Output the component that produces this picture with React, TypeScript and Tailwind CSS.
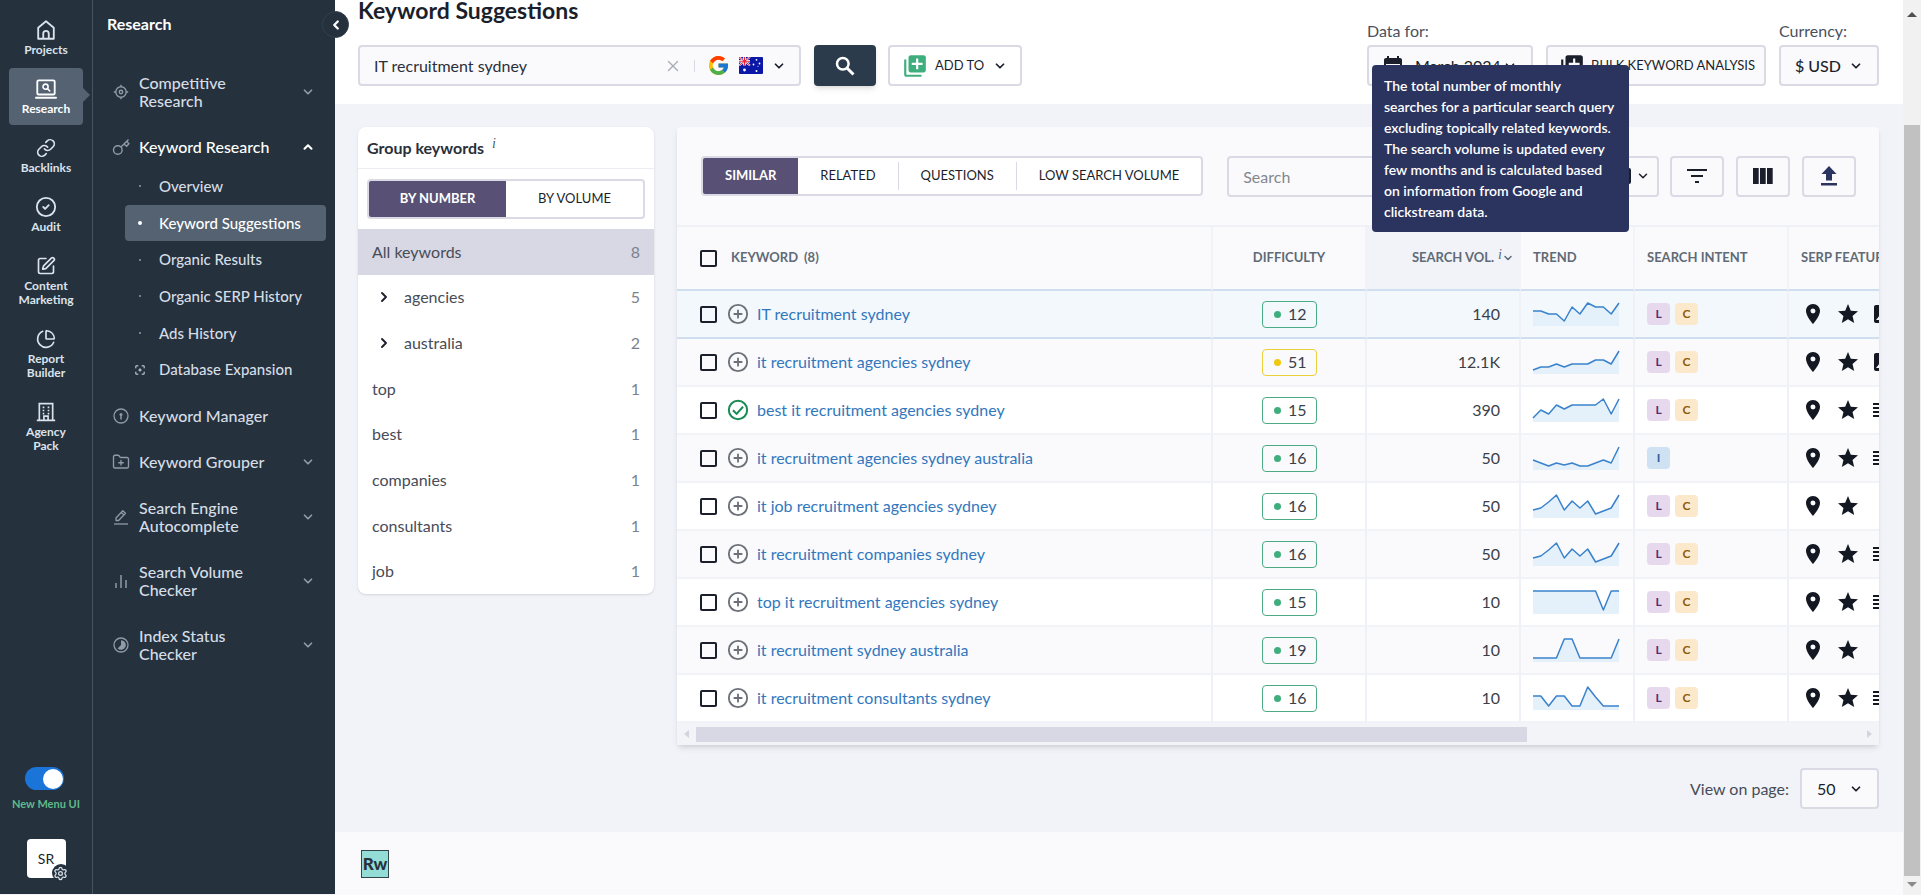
import { useState, type ReactNode } from 'react';
import {
  Link,
  CircleCheck,
  SquarePen,
  ChartPie,
  ChevronDown,
  ChevronUp,
  ChevronLeft,
  ChevronRight,
  FolderPlus,
  Settings,
  X,
  CirclePlus,
} from 'lucide-react';
import {
  MdLocationOn,
  MdStar,
  MdImage,
  MdLibraryAdd,
  MdCalendarMonth,
  MdFilterList,
} from 'react-icons/md';
import { FcGoogle } from 'react-icons/fc';

interface Keyword {
  text: string;
  added?: boolean;
  difficulty: number;
  volume: string;
  trend: number[];
  intents: string[];
  extra?: 'image' | 'list';
}

const KEYWORDS: Keyword[] = [
  { text: 'IT recruitment sydney', difficulty: 12, volume: '140', trend: [9, 9, 12, 12, 19, 5, 12, 1, 5, 5, 12, 1], intents: ['L', 'C'], extra: 'image' },
  { text: 'it recruitment agencies sydney', difficulty: 51, volume: '12.1K', trend: [20, 17, 17, 14, 17, 14, 14, 14, 10, 10, 14, 1], intents: ['L', 'C'], extra: 'image' },
  { text: 'best it recruitment agencies sydney', added: true, difficulty: 15, volume: '390', trend: [20, 12, 16, 7, 11, 7, 7, 7, 7, 1, 16, 1], intents: ['L', 'C'], extra: 'list' },
  { text: 'it recruitment agencies sydney australia', difficulty: 16, volume: '50', trend: [14, 17, 20, 17, 19, 17, 20, 20, 17, 14, 17, 1], intents: ['I'], extra: 'list' },
  { text: 'it job recruitment agencies sydney', difficulty: 16, volume: '50', trend: [16, 14, 8, 1, 16, 7, 14, 7, 20, 17, 14, 1], intents: ['L', 'C'] },
  { text: 'it recruitment companies sydney', difficulty: 16, volume: '50', trend: [16, 14, 8, 1, 16, 7, 14, 7, 20, 17, 14, 1], intents: ['L', 'C'], extra: 'list' },
  { text: 'top it recruitment agencies sydney', difficulty: 15, volume: '10', trend: [1, 1, 1, 1, 1, 1, 1, 1, 1, 20, 1, 1], intents: ['L', 'C'], extra: 'list' },
  { text: 'it recruitment sydney australia', difficulty: 19, volume: '10', trend: [20, 20, 20, 20, 1, 1, 20, 20, 20, 20, 20, 1], intents: ['L', 'C'] },
  { text: 'it recruitment consultants sydney', difficulty: 16, volume: '10', trend: [10, 10, 20, 10, 10, 20, 20, 1, 11, 20, 20, 20], intents: ['L', 'C'], extra: 'list' },
];

const GROUPS = [
  { name: 'agencies', count: 5, nested: true },
  { name: 'australia', count: 2, nested: true },
  { name: 'top', count: 1 },
  { name: 'best', count: 1 },
  { name: 'companies', count: 1 },
  { name: 'consultants', count: 1 },
  { name: 'job', count: 1 },
];

const INTENT_STYLES: Record<string, string> = {
  L: 'bg-[#e6d9ee] text-[#5a2d73]',
  C: 'bg-[#fce9cb] text-[#8a5a10]',
  I: 'bg-[#cfe2f4] text-[#2c5f96]',
};

const Home = () => (
  <svg viewBox="0 0 24 24" className="h-[22px] w-[22px]" fill="none" stroke="currentColor" strokeWidth="2" strokeLinejoin="round">
    <path d="M3.500 21.500V9.500L12 2.500l8.500 7v12z" />
    <path d="M9 21.500V16a3 3 0 0 1 6 0v5.500" />
  </svg>
);

const LaptopSearch = () => (
  <svg viewBox="0 0 24 24" className="h-[22px] w-6" fill="none" stroke="currentColor" strokeWidth="2" strokeLinecap="round">
    <rect x="2.500" y="2.500" width="19" height="15.500" rx="1.500" />
    <path d="M1 21.500h22" />
    <circle cx="11.500" cy="9.500" r="2.800" strokeWidth="1.700" />
    <path d="M13.700 11.700l2.300 2.300" strokeWidth="1.700" />
  </svg>
);

const Building = () => (
  <svg viewBox="0 0 24 24" className="h-5 w-5" fill="none" stroke="currentColor" strokeWidth="2">
    <path d="M4 22V2h16v20M1 22h22M9.500 22v-5h5v5" />
    <path d="M8 6.500h2M14 6.500h2M8 10.200h2M14 10.200h2M8 14h2M14 14h2" />
  </svg>
);

const Target = () => (
  <svg viewBox="0 0 16 16" className="h-4 w-4" fill="none" stroke="currentColor" strokeWidth="1.400">
    <circle cx="8" cy="8" r="5.200" />
    <circle cx="8" cy="8" r="1.700" />
    <path d="M8 .800v2M8 13.200v2M.800 8h2M13.200 8h2" />
  </svg>
);

const KeyIcon = () => (
  <svg viewBox="0 0 18 18" className="h-[18px] w-[18px]" fill="none" stroke="currentColor" strokeWidth="1.400">
    <circle cx="5.800" cy="12" r="4.300" />
    <path d="M9 9l7.500-7.500M12 6l2.600 2.300 2.300-2.600-2.300-2.400" />
  </svg>
);

const CircleKey = () => (
  <svg viewBox="0 0 16 16" className="h-4 w-4" fill="none" stroke="currentColor" strokeWidth="1.300">
    <circle cx="8" cy="8" r="7" />
    <circle cx="8" cy="6.500" r="1.500" fill="currentColor" stroke="none" />
    <path d="M8 6.500v5" strokeWidth="1.500" />
  </svg>
);

const PenUnderline = () => (
  <svg viewBox="0 0 16 16" className="h-4 w-4" fill="none" stroke="currentColor" strokeWidth="1.300" strokeLinejoin="round">
    <path d="M3 11.500V9l6.800-7.300 2.700 2.600L5.600 11.500zM8.300 3.400l2.600 2.500" />
    <path d="M1 15h14" />
  </svg>
);

const Bars = () => (
  <svg viewBox="0 0 16 16" className="h-4 w-4" fill="none" stroke="currentColor" strokeWidth="1.500">
    <path d="M3 15v-5M8 15V2M13 15V7" />
  </svg>
);

const StatusCircle = () => (
  <svg viewBox="0 0 16 16" className="h-4 w-4">
    <circle cx="8" cy="8" r="7" fill="none" stroke="currentColor" strokeWidth="1.300" />
    <path d="M8 3.200A4.800 4.800 0 1 1 4.600 11.400L8 8z" fill="currentColor" />
  </svg>
);

const Expansion = () => (
  <svg viewBox="0 0 12 12" className="h-[10px] w-[10px]" fill="none" stroke="currentColor" strokeWidth="1.200">
    <path d="M1 4V1h3M8 1h3v3M11 8v3H8M4 11H1V8M6 4v4M4 6h4" />
  </svg>
);

const AddedCheck = () => (
  <svg viewBox="0 0 24 24" className="h-[22px] w-[22px] text-[#1a8a54]" fill="none" stroke="currentColor" strokeWidth="2.200">
    <circle cx="12" cy="12" r="10" />
    <path d="M6.500 12.200l4 4 7-7.700" />
  </svg>
);

const TextLines = () => (
  <svg viewBox="0 0 20 16" className="h-4 w-5 shrink-0" fill="none" stroke="currentColor" strokeWidth="2">
    <path d="M0 2h20M0 6h20M0 10h20M0 14h20" />
  </svg>
);

const AustraliaFlag = () => (
  <svg viewBox="0 0 24 17" className="h-[17px] w-6">
    <rect width="24" height="17" rx="1" fill="#0a17a7" />
    <path d="M0 0l11 8.500M11 0L0 8.500" stroke="#fff" strokeWidth="1.800" />
    <path d="M5.500 0v8.500M0 4.250h11" stroke="#fff" strokeWidth="2.600" />
    <path d="M5.500 0v8.500M0 4.250h11M0 0l11 8.500M11 0L0 8.500" stroke="#e6273e" strokeWidth="1" />
    <g fill="#fff">
      <circle cx="5.500" cy="13" r="1.400" />
      <circle cx="17.500" cy="2.800" r=".900" />
      <circle cx="14.500" cy="7.500" r=".900" />
      <circle cx="20.500" cy="6.500" r=".900" />
      <circle cx="17.500" cy="14" r="1" />
      <circle cx="19" cy="9.300" r=".500" />
    </g>
  </svg>
);

const Sparkline = ({ values }: { values: number[] }) => {
  const points = values.map((v, i) => `${(i * 86) / 11},${v}`).join(' ');
  return (
    <svg viewBox="0 0 86 24" className="h-6 w-[86px] overflow-visible">
      <polygon points={`0,24 ${points} 86,24`} fill="#e4f0fa" />
      <polyline points={points} fill="none" stroke="#3a82cc" strokeWidth="1.500" strokeLinejoin="round" />
    </svg>
  );
};

const Checkbox = ({ label }: { label: string }) => (
  <input
    type="checkbox"
    aria-label={label}
    className="h-[17px] w-[17px] shrink-0 appearance-none rounded-xs border-2 border-[#1b1f2b] checked:bg-[#1b1f2b]"
  />
);

const RAIL: { label: string; icon: ReactNode; active?: boolean }[] = [
  { label: 'Projects', icon: <Home /> },
  { label: 'Research', icon: <LaptopSearch />, active: true },
  { label: 'Backlinks', icon: <Link className="h-5 w-5" /> },
  { label: 'Audit', icon: <CircleCheck className="h-[22px] w-[22px]" /> },
  { label: 'Content Marketing', icon: <SquarePen className="h-5 w-5" /> },
  { label: 'Report Builder', icon: <ChartPie className="h-5 w-5" /> },
  { label: 'Agency Pack', icon: <Building /> },
];

const SUB_ITEMS = ['Overview', 'Keyword Suggestions', 'Organic Results', 'Organic SERP History', 'Ads History', 'Database Expansion'];

const IconRail = () => {
  const [newMenu, setNewMenu] = useState(true);
  return (
    <nav className="flex w-[93px] shrink-0 flex-col items-center border-r border-[#475462] pt-[9px] pb-4">
      <ul className="flex w-full flex-col gap-0.5 px-[9px]">
        {RAIL.map((item) => (
          <li key={item.label} className="relative">
            <a
              href="#"
              className={`flex flex-col items-center gap-[3px] rounded px-1 pt-[11px] pb-[9px] text-center text-xs leading-[14px] font-bold ${item.active ? 'bg-[#546272] text-white' : 'text-[#dbe3ec]'}`}
            >
              <span className="flex h-5 items-center">{item.icon}</span>
              <span>{item.label}</span>
            </a>
            {item.active && (
              <span className="absolute top-5 left-full border-y-7 border-l-7 border-y-transparent border-l-[#546272]" />
            )}
          </li>
        ))}
      </ul>
      <label className="mt-auto flex flex-col items-center gap-[6px] text-[11px] leading-4 font-bold text-[#5fb98a]">
        <input type="checkbox" className="peer sr-only" checked={newMenu} onChange={() => setNewMenu(!newMenu)} />
        <span className={`mr-1 flex h-[23px] w-[39px] items-center rounded-full p-px ${newMenu ? 'justify-end bg-[#1b75d8]' : 'bg-gray-500'}`}>
          <span className="h-5 w-5 rounded-full bg-white" />
        </span>
        New Menu UI
      </label>
      <button className="relative mt-[27px] h-[39px] w-[39px] rounded bg-white text-sm text-[#1b1f2b]">
        SR
        <span className="absolute -right-[4px] -bottom-[4px] flex h-[18px] w-[18px] items-center justify-center rounded-full bg-[#25313d] text-[#dbe3ec]">
          <Settings className="h-[15px] w-[15px]" />
        </span>
      </button>
    </nav>
  );
};

const MenuItem = ({ icon, label, open, plain }: { icon: ReactNode; label: string; open?: boolean; plain?: boolean }) => (
  <button className={`flex w-full items-center py-[14px] pr-5 pl-[19px] text-left leading-[18px] font-medium ${open ? 'text-white' : 'text-[#d5dde6]'}`}>
    <span className="flex w-[18px] shrink-0 justify-center text-[#8f9ba7]">{icon}</span>
    <span className="ml-[9px] w-[140px]">{label}</span>
    {!plain &&
      (open ? <ChevronUp className="ml-auto h-[14px] w-[14px]" strokeWidth={3.5} /> : <ChevronDown className="ml-auto h-[14px] w-[14px] text-[#8f9ba7]" strokeWidth={3} />)}
  </button>
);

const ResearchMenu = () => (
  <nav className="relative w-[242px] shrink-0 text-base">
    <h2 className="px-[14px] pt-[14px] pb-[26px] leading-5 font-bold text-white">Research</h2>
    <MenuItem icon={<Target />} label="Competitive Research" />
    <MenuItem icon={<KeyIcon />} label="Keyword Research" open />
    <ul className="-mt-0.5 mb-[5px] grid min-h-[220px] auto-rows-fr pr-[9px] pl-8">
      {SUB_ITEMS.map((item) => {
        const active = item === 'Keyword Suggestions';
        return (
          <li key={item}>
            <a href="#" className={`flex h-full items-center rounded text-[15px] font-medium ${active ? 'bg-[#546272] text-white' : 'text-[#d5dde6]'}`}>
              <span className="ml-[9px] flex w-3 justify-center">
                {item === 'Database Expansion' ? <Expansion /> : <span className={`rounded-full ${active ? 'h-1 w-1 bg-white' : 'h-0.5 w-0.5 bg-[#8f9ba7]'}`} />}
              </span>
              <span className="ml-[13px] whitespace-nowrap">{item}</span>
            </a>
          </li>
        );
      })}
    </ul>
    <MenuItem icon={<CircleKey />} label="Keyword Manager" plain />
    <MenuItem icon={<FolderPlus className="h-[18px] w-[18px]" strokeWidth={1.8} />} label="Keyword Grouper" />
    <MenuItem icon={<PenUnderline />} label="Search Engine Autocomplete" />
    <MenuItem icon={<Bars />} label="Search Volume Checker" />
    <MenuItem icon={<StatusCircle />} label="Index Status Checker" />
    <button aria-label="Collapse menu" className="absolute top-[11px] -right-[14px] z-10 flex h-[27px] w-[27px] items-center justify-center rounded-full border border-[#33414f] bg-[#25313d] text-white">
      <ChevronLeft className="h-[14px] w-[14px]" strokeWidth={4} />
    </button>
  </nav>
);

const Header = () => (
  <header className="flex items-end justify-between bg-white pr-6 pb-[18px] pl-[23px]">
    <div>
      <h1 className="text-[23px] leading-5 font-bold text-[#1b1f2b]">Keyword Suggestions</h1>
      <div className="mt-[25px] flex h-[41px]">
        <div className="flex w-[443px] items-center rounded border-2 border-[#d9dae4] bg-[#fafafc] pr-[13px] pl-[14px]">
          <input aria-label="Keyword" defaultValue="IT recruitment sydney" className="min-w-0 flex-1 bg-transparent text-base text-[#2a2f3a] outline-none" />
          <button aria-label="Clear"><X className="h-[18px] w-[18px] text-[#a9adb8]" strokeWidth={1.800} /></button>
          <span className="mr-[12px] ml-[12px] h-3 w-px bg-[#d9dae4]" />
          <button aria-label="Search engine" className="flex items-center">
            <FcGoogle className="h-[23px] w-[23px]" />
            <span className="mr-[9px] ml-[9px]"><AustraliaFlag /></span>
            <ChevronDown className="h-[14px] w-[14px] text-[#1b1f2b]" strokeWidth={3} />
          </button>
        </div>
        <button aria-label="Search" className="ml-[13px] flex w-[62px] items-center justify-center rounded bg-[#2b3b4b] text-white shadow-md">
          <svg viewBox="0 0 20 20" className="h-5 w-5" fill="none" stroke="currentColor" strokeWidth="2.500">
            <circle cx="7.800" cy="7.800" r="5.800" />
            <path d="M12 12l6.500 6.500" strokeWidth="3" />
          </svg>
        </button>
        <button className="ml-3 flex items-center rounded border-2 border-[#d9dae4] bg-white pr-[13px] pl-3 text-[13px] text-[#1b1f2b]">
          <MdLibraryAdd className="h-[26px] w-[26px] text-[#3fae7e]" />
          <span className="ml-[7px]">ADD TO</span>
          <ChevronDown className="ml-[9px] h-[14px] w-[14px]" strokeWidth={3} />
        </button>
      </div>
    </div>
    <div className="flex items-end gap-[13px] text-[#1b1f2b]">
      <label className="text-base leading-5 text-[#4a505c]">
        Data for:
        <span className="relative mt-1 flex h-[41px] w-[166px] items-center rounded border-2 border-[#d9dae4] bg-[#fafafc] text-[#1b1f2b]">
          <MdCalendarMonth className="ml-[12px] h-6 w-6" />
          <select className="h-full flex-1 appearance-none pl-[10px] text-base outline-none">
            <option>March 2024</option>
          </select>
          <ChevronDown className="pointer-events-none absolute right-[14px] h-[14px] w-[14px]" strokeWidth={3} />
        </span>
      </label>
      <button className="flex h-[41px] w-[220px] items-center rounded border-2 border-[#d9dae4] bg-[#fafafc] pl-[11px] text-[13px] whitespace-nowrap">
        <MdLibraryAdd className="h-[26px] w-[26px]" />
        <span className="ml-[6px]">BULK KEYWORD ANALYSIS</span>
      </button>
      <label className="text-base leading-5 text-[#4a505c]">
        Currency:
        <span className="relative mt-1 flex h-[41px] w-[100px] items-center rounded border-2 border-[#d9dae4] bg-[#fafafc] text-[#1b1f2b]">
          <select className="h-full w-full appearance-none pl-[14px] text-base font-medium outline-none">
            <option>$ USD</option>
          </select>
          <ChevronDown className="pointer-events-none absolute right-[14px] h-[14px] w-[14px]" strokeWidth={3} />
        </span>
      </label>
    </div>
  </header>
);

const GroupPanel = () => (
  <section className="w-[296px] shrink-0 rounded-lg bg-white shadow-sm">
    <h2 className="flex h-[42px] items-center border-b border-[#ececf2] px-[9px] text-base font-bold text-[#2a2f3a]">
      Group keywords
      <span className="mb-2 ml-2 font-['Liberation_Serif',serif] text-[14px] font-normal text-[#4c6468] italic">i</span>
    </h2>
    <div className="mx-[9px] my-[10px] flex h-10 rounded border-2 border-[#d9dae4] text-[13px]">
      <button className="flex-1 rounded-l-xs bg-[#585075] font-bold text-white">BY NUMBER</button>
      <button className="flex-1 text-[#1b1f2b]">BY VOLUME</button>
    </div>
    <ul className="grid min-h-[365px] auto-rows-fr text-base text-[#474c57]">
      <li className="flex items-center justify-between bg-[#d7d8e4] px-[14px]">
        All keywords <span className="text-[#7b828e]">8</span>
      </li>
      {GROUPS.map((group) => (
        <li key={group.name} className="flex items-center px-[14px]">
          {group.nested && (
            <button aria-label={`Expand ${group.name}`} className="mr-3 ml-1">
              <ChevronRight className="h-4 w-4 text-[#1b1f2b]" strokeWidth={2.800} />
            </button>
          )}
          {group.name}
          <span className="ml-auto text-[#7b828e]">{group.count}</span>
        </li>
      ))}
    </ul>
  </section>
);

const TABS = ['SIMILAR', 'RELATED', 'QUESTIONS', 'LOW SEARCH VOLUME'];

const Toolbar = () => (
  <div className="flex h-[100px] items-center border-b-2 border-[#f0f1f6] pr-[23px] pl-6">
    <div className="flex h-10 items-center rounded border-2 border-[#d9dae4] bg-white text-[13px] text-[#1b1f2b]">
      {TABS.map((tab, i) =>
        i === 0 ? (
          <button key={tab} className="h-full rounded-l-xs bg-[#585075] px-[22px] font-bold text-white">{tab}</button>
        ) : (
          <button key={tab} className={`h-7 px-[22px] ${i > 1 ? 'border-l border-[#d9dae4]' : ''}`}>{tab}</button>
        ),
      )}
    </div>
    <input
      aria-label="Search"
      placeholder="Search"
      className="ml-6 h-[41px] min-w-0 flex-1 rounded border-2 border-[#d9dae4] bg-[#fafafc] px-[14px] text-base outline-none placeholder:text-[#83878f]"
    />
    <button aria-label="Columns" className="ml-3 flex h-[41px] w-[70px] items-center justify-end gap-[5px] rounded border-2 border-[#d9dae4] bg-[#fafafc] pr-[7px] text-[#1b1f2b]">
      <span className="h-4 w-4 rounded-xs border-2" />
      <ChevronDown className="h-[14px] w-[14px]" strokeWidth={2.500} />
    </button>
    <div className="ml-[11px] flex gap-[12px] text-[#1b1f2b]">
      <button aria-label="Filter" className="flex h-[41px] w-[54px] items-center justify-center rounded border-2 border-[#d9dae4] bg-[#fafafc]">
        <svg viewBox="0 0 20 14" className="h-[14px] w-5" fill="currentColor">
          <path d="M0 0h20v2H0zM4 6h12v2H4zM8 12h4v2H8z" />
        </svg>
      </button>
      <button aria-label="Table columns" className="flex h-[41px] w-[54px] items-center justify-center rounded border-2 border-[#d9dae4] bg-[#fafafc]">
        <svg viewBox="0 0 20 16" className="h-4 w-5" fill="currentColor">
          <path d="M0 0h5.700v16H0zM7 0h5.700v16H7zM14 0h5.700v16H14z" />
        </svg>
      </button>
      <button aria-label="Export" className="flex h-[41px] w-[54px] items-center justify-center rounded border-2 border-[#d9dae4] bg-[#fafafc] text-[#2b335f]">
        <svg viewBox="0 0 16 20" className="h-5 w-4" fill="currentColor">
          <path d="M8 0l7.500 8H11v6.500H5V8H.500zM0 17h16v2.500H0z" />
        </svg>
      </button>
    </div>
  </div>
);

const KeywordRow = ({ keyword, index }: { keyword: Keyword; index: number }) => {
  const rowBg = index === 0 ? 'bg-[#f2f8fc]' : index % 2 ? 'bg-[#fafafc]' : 'bg-white';
  const line = index === 0 ? 'border-b-[#cfdff0]' : 'border-b-[#f2f3f8]';
  const cell = `h-12 border-r-2 border-b-2 border-r-[#f0f1f6] ${line}`;
  return (
    <tr className={rowBg}>
      <td className={`${cell} pl-[23px]`}>
        <div className="flex items-center">
          <Checkbox label={`Select ${keyword.text}`} />
          <button aria-label="Add keyword" className="ml-[10px]">
            {keyword.added ? <AddedCheck /> : <CirclePlus className="h-[22px] w-[22px] text-[#6b7078]" strokeWidth={2} />}
          </button>
          <a href="#" className="ml-[8px] text-base text-[#3277bd]">{keyword.text}</a>
        </div>
      </td>
      <td className={cell}>
        <div className={`mx-auto flex h-[27px] w-[55px] items-center rounded border pr-[9px] pl-[11px] text-base text-[#3a3f4a] ${keyword.difficulty > 50 ? 'border-[#ecd03a]' : 'border-[#4aab84]'}`}>
          <span className={`h-[7px] w-[7px] rounded-full ${keyword.difficulty > 50 ? 'bg-[#efc90f]' : 'bg-[#3fae7e]'}`} />
          <span className="ml-auto">{keyword.difficulty}</span>
        </div>
      </td>
      <td className={`${cell} pr-[19px] text-right text-base text-[#3a3f4a]`}>{keyword.volume}</td>
      <td className={`${cell} pl-3`}>
        <Sparkline values={keyword.trend} />
      </td>
      <td className={`${cell} pl-3`}>
        <div className="flex gap-[5px]">
          {keyword.intents.map((intent) => (
            <span key={intent} className={`flex h-[22px] w-[23px] items-center justify-center rounded text-xs font-bold ${INTENT_STYLES[intent]}`}>
              {intent}
            </span>
          ))}
        </div>
      </td>
      <td className={`${cell} pl-3`}>
        <div className="flex items-center gap-[11px] text-[#131822]">
          <MdLocationOn className="h-6 w-6 shrink-0" />
          <MdStar className="h-6 w-6 shrink-0" />
          {keyword.extra === 'image' && <MdImage className="h-6 w-6 shrink-0" />}
          {keyword.extra === 'list' && (
            <span className="pl-0.5">
              <TextLines />
            </span>
          )}
        </div>
      </td>
    </tr>
  );
};

const KeywordTable = () => {
  const head = 'h-16 border-r-2 border-b-2 border-r-[#f2f3f8] border-b-[#cfdff0] text-[13px] font-bold text-[#5f6b76]';
  return (
    <div className="overflow-hidden">
      <table className="w-[1686px] table-fixed border-separate border-spacing-0">
        <thead>
          <tr>
            <th className={`${head} w-[536px] pl-[23px]`}>
              <div className="flex items-center">
                <Checkbox label="Select all" />
                <span className="ml-[14px]">KEYWORD</span>
                <span className="ml-[6px]">(8)</span>
              </div>
            </th>
            <th className={`${head} w-[154px]`}>DIFFICULTY</th>
            <th className={`${head} w-[154px] bg-[#f2f3f8] pr-[5px]`}>
              <div className="flex items-center justify-end">
                SEARCH VOL.
                <span className="mb-2 ml-1 font-['Liberation_Serif',serif] text-[14px] font-normal italic">i</span>
                <ChevronDown className="h-3 w-3" strokeWidth={3} />
              </div>
            </th>
            <th className={`${head} w-[114px] pl-3 text-left`}>TREND</th>
            <th className={`${head} w-[154px] pl-3 text-left`}>SEARCH INTENT</th>
            <th className={`${head} pl-3 text-left`}>SERP FEATURES</th>
          </tr>
        </thead>
        <tbody>
          {KEYWORDS.map((keyword, i) => (
            <KeywordRow key={keyword.text} keyword={keyword} index={i} />
          ))}
        </tbody>
      </table>
    </div>
  );
};

const Footer = () => (
  <footer className="flex flex-1 items-center bg-[#fafafc] px-[26px]">
    <svg viewBox="0 0 28 28" className="h-7 w-7">
      <rect x=".500" y=".500" width="27" height="27" fill="#93ddd6" stroke="#31474a" />
      <text x="14" y="20" textAnchor="middle" fontSize="17" fontWeight="900" fill="#25313d">Rw</text>
    </svg>
  </footer>
);

export default function App() {
  return (
    <div className="flex h-screen overflow-hidden bg-[#f2f3f8] font-[Lato,'Open_Sans',sans-serif]">
      <aside className="flex shrink-0 border-b border-[#f2f3f8] bg-[#25313d]">
        <IconRail />
        <ResearchMenu />
      </aside>
      <main className="relative flex min-w-0 flex-1 flex-col">
        <Header />
        <div className="flex items-start gap-[23px] pt-[23px] pr-6 pl-[23px]">
          <GroupPanel />
          <section className="min-w-0 flex-1 rounded bg-[#fafafc] shadow-md">
            <Toolbar />
            <KeywordTable />
            <div className="flex h-[22px] items-center bg-[#f3f4f8] px-[7px]">
              <span className="border-y-4 border-r-5 border-y-transparent border-r-[#d3d4de]" />
              <span className="mx-[7px] flex flex-1">
                <span className="h-[15px] w-5/7 bg-[#d7d8e4]" />
              </span>
              <span className="border-y-4 border-l-5 border-y-transparent border-l-[#d3d4de]" />
            </div>
          </section>
        </div>
        <label className="mt-[23px] mr-6 mb-[23px] flex items-center justify-end gap-[11px] text-base text-[#474c57]">
          View on page:
          <span className="relative flex h-[41px] w-[79px] items-center rounded border-2 border-[#d9dae4] bg-[#fafafc] text-[#1b1f2b]">
            <select className="h-full w-full appearance-none pl-[15px] outline-none">
              <option>50</option>
            </select>
            <ChevronDown className="pointer-events-none absolute right-[14px] h-[14px] w-[14px]" strokeWidth={3} />
          </span>
        </label>
        <Footer />
        <div role="tooltip" className="absolute top-[65px] right-[274px] w-[257px] rounded bg-[#2b335f] px-3 py-[10px] text-sm leading-[21px] font-semibold text-white">
          The total number of monthly searches for a particular search query excluding topically related keywords. The search volume is updated every few months and is calculated based on information from Google and clickstream data.
        </div>
      </main>
      <div className="flex w-[18px] shrink-0 flex-col items-center bg-[#f1f1f1] pt-3 pb-2">
        <span className="border-x-5 border-b-5 border-x-transparent border-b-[#505050]" />
        <span className="mt-[108px] w-4 flex-1 bg-[#c1c1c1]" />
        <span className="mt-[6px] border-x-5 border-t-5 border-x-transparent border-t-[#8a8a8a]" />
      </div>
    </div>
  );
}
